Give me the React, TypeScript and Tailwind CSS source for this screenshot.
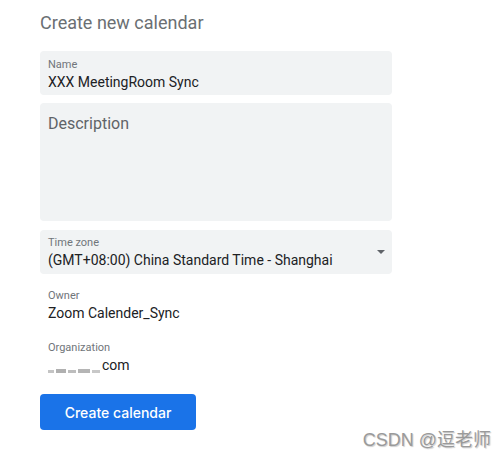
function Field({ label, value }: { label: string; value: React.ReactNode }) {
  return (
    <div className="flex flex-col px-[8px]">
      <div className="text-[11px] leading-[14px] text-[#70757a]">{label}</div>
      <div className="text-[14px] leading-[20px] text-[#202124]">{value}</div>
    </div>
  );
}

export default function App() {
  return (
    <div className="relative w-[503px] h-[458px] bg-white overflow-hidden" style={{ fontFamily: 'Roboto, "Noto Sans", sans-serif' }}>
      <div className="flex flex-col items-start pl-[40px] pt-[11px] w-[352px] box-content">
        <h1 className="text-[18px] leading-[24px] text-[#6b6f73] font-normal">Create new calendar</h1>
        <div className="mt-[16px] w-full h-[44px] rounded-[4px] bg-[#f1f3f4] pt-[7px]">
          <Field label="Name" value="XXX MeetingRoom Sync" />
        </div>
        <div className="mt-[8px] w-full h-[118px] rounded-[4px] bg-[#f1f3f4] px-[8px] pt-[9px]">
          <div className="text-[16px] leading-[24px] text-[#5f6368]">Description</div>
        </div>
        <div className="mt-[9px] w-full h-[44px] rounded-[4px] bg-[#f1f3f4] pr-[7px] pt-[6px] flex justify-between">
          <Field label="Time zone" value="(GMT+08:00) China Standard Time - Shanghai" />
          <div className="mt-[14px] w-0 h-0 border-l-[4px] border-r-[4px] border-t-[4px] border-l-transparent border-r-transparent border-t-[#5f6368]" />
        </div>
        <div className="mt-[15px]">
          <Field label="Owner" value="Zoom Calender_Sync" />
        </div>
        <div className="mt-[18px]">
          <Field
            label="Organization"
            value={
              <span className="flex items-center">
                <span className="flex items-end gap-[2px] h-[15px] w-[55px]">
                  <span className="w-[6px] h-[3px] bg-[#c4c4c4]" />
                  <span className="w-[10px] h-[4px] bg-[#b0b0b0]" />
                  <span className="w-[8px] h-[3px] bg-[#bdbdbd]" />
                  <span className="w-[12px] h-[4px] bg-[#b5b5b5]" />
                  <span className="w-[8px] h-[3px] bg-[#c8c8c8]" />
                </span>
                <span className="-ml-[1px]">com</span>
              </span>
            }
          />
        </div>
        <button
          className="mt-[19px] h-[36px] w-[156px] rounded-[4px] bg-[#1a73e8] text-white text-[14px] font-medium"
          style={{ fontFamily: 'Inter, Roboto, sans-serif' }}
        >
          Create calendar
        </button>
      </div>
      <div
        className="absolute right-[12px] bottom-[5px] text-[18px] leading-[26px] text-[#9a9a9a]"
        style={{ fontFamily: '"Liberation Sans", "Noto Sans CJK SC", sans-serif', textShadow: '1px 1px 1px rgba(0,0,0,0.2)' }}
      >
        CSDN @逗老师
      </div>
    </div>
  );
}
